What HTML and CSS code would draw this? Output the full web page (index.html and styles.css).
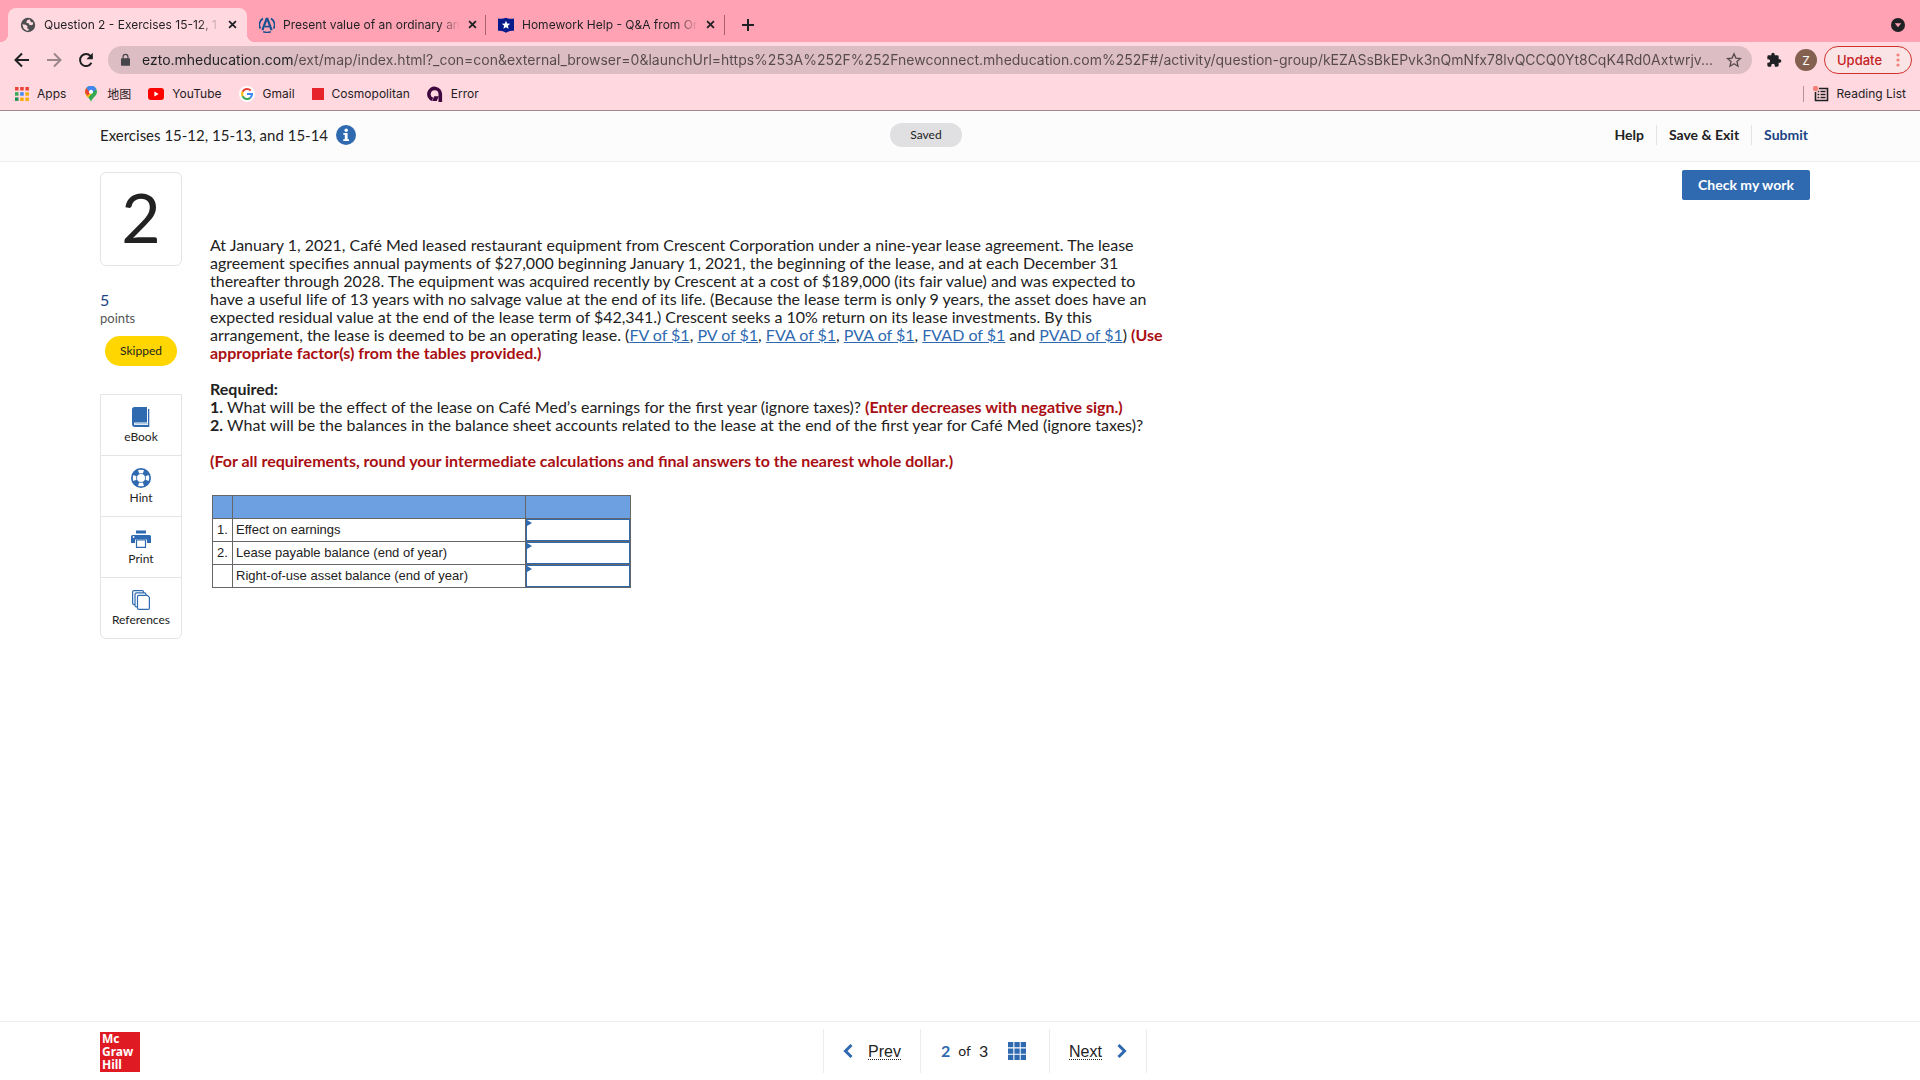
FILE: index.html
```html
<!DOCTYPE html>
<html lang="en">
<head>
    <meta charset="UTF-8">
    <meta name="viewport" content="width=device-width, initial-scale=1.0">
    <title>Question 2 - Exercises 15-12, 15-13, and 15-14</title>
    <link rel="stylesheet" href="styles.css">
</head>
<body>
    <div class="browser">
        <div class="tabs">
            <div class="tab active">
                <svg class="favicon" viewBox="0 0 16 16"><circle cx="8" cy="8" r="7.2" fill="#4d4d50"/><path d="M9.600 2.300L6.800 3.600 6.400 6 8.800 6.200 9.200 7.800 11.500 8.200 13.200 7.200 12.600 5 11 5.200zM2.300 7.200L5.600 7.800 7.600 9.200 7 11.200 8.800 12 8.400 13.800 6.400 13.600 3.600 11.600z" fill="#ffd9df"/></svg>
                <span class="tab-title">Question 2 - Exercises 15-12, 1</span>
                <button class="close" aria-label="Close tab"><svg viewBox="0 0 10 10"><path d="M1.2 1.2l7.6 7.6M8.8 1.2L1.2 8.8"/></svg></button>
            </div>
            <div class="tab">
                <svg class="favicon" viewBox="0 0 16 16"><g fill="none" stroke="#16508f"><path d="M4 1.600A7.200 7.200 0 0 0 1.400 11.500M12 1.600a7.200 7.200 0 0 1 2.600 9.900" stroke-width="1.700"/><path d="M3.400 13.200L7.600 1.800h.8l4.200 11.400" stroke-width="2.200"/><path d="M6 9.600h4.500" stroke-width="1.600"/><path d="M4.200 14.800q3.800 1.200 7.600 0" stroke-width="1.500"/></g></svg>
                <span class="tab-title">Present value of an ordinary an</span>
                <button class="close" aria-label="Close tab"><svg viewBox="0 0 10 10"><path d="M1.2 1.2l7.6 7.6M8.8 1.2L1.2 8.8"/></svg></button>
            </div>
            <div class="tab">
                <svg class="favicon" viewBox="0 0 16 16"><path d="M0 1.500q4.200 1 8-.8 3.800 1.800 8 .8v12.300q-4.500-.6-8 2-3.500-2.600-8-2z" fill="#061a8c"/><path d="M8 3.700l1.200 2.800 3 .3-2.300 2 .7 3L8 10.200l-2.600 1.600.7-3-2.300-2 3-.3z" fill="#fff"/></svg>
                <span class="tab-title">Homework Help - Q&amp;A from Or</span>
                <button class="close" aria-label="Close tab"><svg viewBox="0 0 10 10"><path d="M1.2 1.2l7.6 7.6M8.8 1.2L1.2 8.8"/></svg></button>
            </div>
            <button class="new-tab" aria-label="New tab"><svg viewBox="0 0 12 12"><path d="M6 0v12M0 6h12"/></svg></button>
            <button class="tab-search" aria-label="Search tabs"><svg viewBox="0 0 14 14"><circle cx="7" cy="7" r="7" fill="#1f2024"/><path d="M3.800 5.300h6.400L7 9.300z" fill="#ff9fb0"/></svg></button>
        </div>
        <div class="toolbar">
            <button class="nav-btn" aria-label="Back"><svg viewBox="0 0 16 16"><path d="M8 1.500L1.500 8 8 14.500M2 8h13"/></svg></button>
            <button class="nav-btn disabled" aria-label="Forward"><svg viewBox="0 0 16 16"><path d="M8 1.500L14.500 8 8 14.500M14 8H1"/></svg></button>
            <button class="nav-btn" aria-label="Reload"><svg viewBox="0 0 16 16"><path d="M13.400 10.800A6 6 0 1 1 12.600 4.100L14.200 5.700"/><path d="M14.800.8v6.400H8.400z" fill="#1f2024" stroke="none"/></svg></button>
            <div class="address">
                <svg class="lock" viewBox="0 0 10 14"><path d="M1 5h8q1 0 1 1v6.500q0 1-1 1H1q-1 0-1-1V6q0-1 1-1z" fill="#46464a"/><path d="M2.300 6V3.400a2.700 2.700 0 0 1 5.400 0V6" fill="none" stroke="#46464a" stroke-width="1.300"/></svg>
                <input class="url" type="text" aria-label="Address" value="ezto.mheducation.com/ext/map/index.html?_con=con&amp;external_browser=0&amp;launchUrl=https%253A%252F%252Fnewconnect.mheducation.com%252F#/activity/question-group/kEZASsBkEPvk3nQmNfx78lvQCCQ0Yt8CqK4Rd0Axtwrjv...">
                <button class="star" aria-label="Bookmark this page"><svg viewBox="0 0 16 16"><path d="M8 1.800l1.900 4.300 4.600.4-3.500 3.100 1 4.600L8 11.800l-4 2.400 1-4.600-3.500-3.100 4.600-.4z"/></svg></button>
            </div>
            <button class="ext" aria-label="Extensions"><svg viewBox="0 0 24 24"><path d="M20.500 11H19V7a2 2 0 0 0-2-2h-4V3.500a2.500 2.500 0 0 0-5 0V5H4a2 2 0 0 0-2 2v3.800h1.500a2.700 2.700 0 0 1 0 5.400H2V20a2 2 0 0 0 2 2h3.800v-1.500a2.700 2.700 0 0 1 5.400 0V22H17a2 2 0 0 0 2-2v-4h1.500a2.500 2.500 0 0 0 0-5z"/></svg></button>
            <button class="avatar">Z</button>
            <button class="update">Update <svg viewBox="0 0 4 14"><circle cx="2" cy="2" r="1.600"/><circle cx="2" cy="7" r="1.600"/><circle cx="2" cy="12" r="1.600"/></svg></button>
        </div>
        <div class="bookmarks">
            <a class="bookmark" href="#"><svg class="apps-icon" viewBox="0 0 14 14"><path d="M0 0h3.500v3.500H0zM5.200 0h3.500v3.500H5.200zM10.400 0h3.500v3.500h-3.500z" fill="#ea4335"/><path d="M0 5.200h3.500v3.500H0z" fill="#34a853"/><path d="M5.200 5.200h3.500v3.500H5.200z" fill="#4285f4"/><path d="M10.400 5.200h3.500v3.500h-3.500zM5.200 10.400h3.500v3.500H5.200zM10.400 10.400h3.500v3.500h-3.500z" fill="#fbab05"/><path d="M0 10.400h3.500v3.500H0z" fill="#1e8e4e"/></svg>Apps</a>
            <a class="bookmark" href="#"><svg class="round-icon" viewBox="-2 0 16 16"><path d="M6 16C5.500 12.500 0 10 0 5.800A6 6 0 0 1 12 5.800C12 10 6.500 12.500 6 16z" fill="#34a853"/><path d="M.8 8.800A6 6 0 0 1 1.400 2L8 6.500 3 11.800z" fill="#fbbc04"/><path d="M.1 6.500A6 6 0 0 1 1.400 2L6 5.800 2.500 9.800z" fill="#ea4335"/><path d="M1.400 2A6 6 0 0 1 11.300 3L6 8z" fill="#4285f4"/><circle cx="6" cy="5.800" r="2.100" fill="#fff"/></svg>地图</a>
            <a class="bookmark" href="#"><svg class="wide-icon" viewBox="0 0 16 12"><rect width="16" height="12" rx="3" fill="#f00"/><path d="M6.400 3.500v5L10.600 6z" fill="#fff"/></svg>YouTube</a>
            <a class="bookmark" href="#"><svg class="round-icon" viewBox="0 0 16 16"><circle cx="8" cy="8" r="8" fill="#fff"/><g fill="none" stroke-width="2.100"><path d="M11.700 4.500A5 5 0 0 0 3.600 5.800" stroke="#ea4335"/><path d="M3.600 5.800a5 5 0 0 0 0 4.500" stroke="#fbbc04"/><path d="M3.600 10.300a5 5 0 0 0 7.800 1.400" stroke="#34a853"/><path d="M11.400 11.700A5 5 0 0 0 13 8H8" stroke="#4285f4"/></g></svg>Gmail</a>
            <a class="bookmark" href="#"><svg class="square-icon" viewBox="0 0 12 12"><path d="M0 0h12v12H0z" fill="#e6242b"/></svg>Cosmopolitan</a>
            <a class="bookmark" href="#"><svg class="round-icon" viewBox="0 0 16 16"><path d="M5.500 13.400A5.700 5.700 0 1 1 13.300 7.800V16" fill="none" stroke="#400a40" stroke-width="3.600"/><path d="M7.200 10.200h4.600l-2 4.800H5.200z" fill="#400a40"/></svg>Error</a>
            <a class="bookmark reading" href="#"><svg class="list-icon" viewBox="0 0 16 16"><path d="M2.500 2.500h12v12h-12z" fill="none" stroke="#1f2024" stroke-width="1.600"/><path d="M4.500 5.500h1.800M7.500 5.500h5M4.500 8.500h1.800M7.500 8.500h5M4.500 11.500h1.800M7.500 11.500h5" stroke="#1f2024" stroke-width="1.600"/><circle cx="2.500" cy="2.500" r="3.500" fill="#ffd9df"/><circle cx="2.500" cy="2.500" r="2.700" fill="#f28279"/></svg>Reading List</a>
        </div>
    </div>

    <header class="app-header">
        <div class="title">
            Exercises 15-12, 15-13, and 15-14
            <button class="info" aria-label="Information"><svg viewBox="0 0 20 20"><circle cx="10" cy="10" r="10" fill="#2f6ab0"/><path d="M7.300 8h4.300v6.200H13V16H7.300v-1.800h1.500V9.800H7.300z" fill="#fff"/><circle cx="10.200" cy="5.200" r="1.700" fill="#fff"/></svg></button>
        </div>
        <span class="saved">Saved</span>
        <nav class="actions">
            <a href="#">Help</a>
            <a href="#">Save &amp; Exit</a>
            <a class="submit" href="#">Submit</a>
        </nav>
    </header>

    <main>
        <aside>
            <div class="number">2</div>
            <div class="points"><b>5</b>points</div>
            <div class="skipped">Skipped</div>
            <div class="tools">
                <button class="tool"><svg viewBox="0 0 20 20"><path d="M3.500 0H16v15.500H4.200a1.300 1.300 0 0 0 0 2.600H17V2h1.300v18H4a3 3 0 0 1-3-3V2.500A2.500 2.500 0 0 1 3.500 0z" fill="#2f6ab0"/><path d="M4 16.800h12.500" stroke="#8db0d8"/></svg>eBook</button>
                <button class="tool"><svg viewBox="0 0 20 20"><circle cx="10" cy="10" r="7" fill="none" stroke="#2f6ab0" stroke-width="6"/><g fill="none" stroke="#fff" stroke-width="3.400"><path d="M7.600 3.900a6.600 6.600 0 0 1 4.800 0M16.100 7.600a6.600 6.600 0 0 1 0 4.800M12.400 16.100a6.600 6.600 0 0 1-4.800 0M3.900 12.400a6.600 6.600 0 0 1 0-4.800"/></g></svg>Hint</button>
                <button class="tool"><svg viewBox="0 0 20 20"><path d="M5 1.500h10v3H5zM1.500 6h17q1.500 0 1.500 1.500V14h-4v-3.500H4V14H0V7.500Q0 6 1.500 6z" fill="#2f6ab0"/><path d="M5.500 11h9v7.300h-9z" fill="#fff" stroke="#2f6ab0" stroke-width="1.200"/><circle cx="2.600" cy="8" r=".9" fill="#fff"/></svg>Print</button>
                <button class="tool"><svg viewBox="0 0 20 20"><g fill="#fff" stroke="#2f6ab0" stroke-width="1.200"><rect x="1.600" y=".6" width="11" height="14" rx="1.500"/><rect x="4" y="2.900" width="11" height="14" rx="1.500"/><path d="M8 5.400h8.400l2 2v10.500q0 1.500-1.500 1.500H8q-1.500 0-1.500-1.500v-11Q6.500 5.400 8 5.400z"/></g></svg>References</button>
            </div>
        </aside>

        <section class="question">
            <p>At January 1, 2021, Café Med leased restaurant equipment from Crescent Corporation under a nine-year lease agreement. The lease<br>
            agreement specifies annual payments of $27,000 beginning January 1, 2021, the beginning of the lease, and at each December 31<br>
            thereafter through 2028. The equipment was acquired recently by Crescent at a cost of $189,000 (its fair value) and was expected to<br>
            have a useful life of 13 years with no salvage value at the end of its life. (Because the lease term is only 9 years, the asset does have an<br>
            expected residual value at the end of the lease term of $42,341.) Crescent seeks a 10% return on its lease investments. By this<br>
            arrangement, the lease is deemed to be an operating lease. (<a href="#">FV of $1</a>, <a href="#">PV of $1</a>, <a href="#">FVA of $1</a>, <a href="#">PVA of $1</a>, <a href="#">FVAD of $1</a> and <a href="#">PVAD of $1</a>) <strong class="red">(Use<br>
            appropriate factor(s) from the tables provided.)</strong></p>
            <p><strong>Required:</strong><br>
            <strong>1.</strong> What will be the effect of the lease on Café Med’s earnings for the first year (ignore taxes)? <strong class="red">(Enter decreases with negative sign.)</strong><br>
            <strong>2.</strong> What will be the balances in the balance sheet accounts related to the lease at the end of the first year for Café Med (ignore taxes)?</p>
            <p><strong class="red">(For all requirements, round your intermediate calculations and final answers to the nearest whole dollar.)</strong></p>

            <table>
                <thead>
                    <tr><th class="num"></th><th class="label"></th><th class="value"></th></tr>
                </thead>
                <tbody>
                    <tr><td class="num">1.</td><td><label for="earnings">Effect on earnings</label></td><td class="answer"><input type="text" id="earnings"></td></tr>
                    <tr><td class="num">2.</td><td><label for="payable">Lease payable balance (end of year)</label></td><td class="answer"><input type="text" id="payable"></td></tr>
                    <tr><td class="num"></td><td><label for="asset">Right-of-use asset balance (end of year)</label></td><td class="answer"><input type="text" id="asset"></td></tr>
                </tbody>
            </table>
        </section>

        <button class="check">Check my work</button>
    </main>

    <footer>
        <div class="logo">Mc<br>Graw<br>Hill</div>
        <nav class="pager">
            <a class="page-link" href="#"><svg viewBox="0 0 10 14"><path d="M8.500 1L2.500 7l6 6"/></svg><span>Prev</span></a>
            <div class="count"><b>2</b><span class="of">of</span><span>3</span>
                <button class="grid" aria-label="All questions"><svg viewBox="0 0 18 18"><path d="M0 0h5.300v5.300H0zM6.400 0h5.300v5.300H6.400zM12.700 0H18v5.300h-5.300zM0 6.400h5.300v5.300H0zM6.400 6.400h5.300v5.300H6.400zM12.700 6.400H18v5.300h-5.300zM0 12.700h5.300V18H0zM6.400 12.700h5.300V18H6.400zM12.700 12.700H18V18h-5.300z"/></svg></button>
            </div>
            <a class="page-link" href="#"><span>Next</span><svg viewBox="0 0 10 14"><path d="M1.500 1l6 6-6 6"/></svg></a>
        </nav>
    </footer>
</body>
</html>
```

FILE: styles.css
```css
* {
    box-sizing: border-box;
}
body {
    margin: 0;
    min-height: 100vh;
    display: flex;
    flex-direction: column;
    background: #fff;
    color: #222;
    font-family: Lato, sans-serif;
    font-size: 16px;
}
button {
    font: inherit;
    color: inherit;
    background: none;
    border: none;
    padding: 0;
    cursor: pointer;
}
a {
    color: inherit;
    text-decoration: none;
}
svg {
    display: block;
    flex: none;
}

/* browser window */
.browser {
    background: #ffd9df;
    border-bottom: 1px solid #a3868f;
    color: #1f2024;
    font-family: Inter, "Noto Sans CJK SC", sans-serif;
    font-size: 12px;
}
.tabs {
    display: flex;
    align-items: center;
    height: 42px;
    padding: 8px 15px 0 8px;
    background: #ffa2b3;
}
.tab {
    position: relative;
    display: flex;
    align-items: center;
    width: 239px;
    height: 34px;
    padding: 0 10px 1px 12px;
}
.tab + .tab::after {
    content: "";
    position: absolute;
    right: 0;
    top: 7px;
    width: 1px;
    height: 20px;
    background: #a9606e;
}
.tab.active {
    background: #ffd9df;
    border-radius: 8px 8px 0 0;
}
.tab.active::before,
.tab.active::after {
    content: "";
    position: absolute;
    bottom: 0;
    width: 8px;
    height: 8px;
}
.tab.active::before {
    left: -8px;
    background: radial-gradient(circle at 0 0, #ffa2b3 8px, #ffd9df 8px);
}
.tab.active::after {
    right: -8px;
    background: radial-gradient(circle at 100% 0, #ffa2b3 8px, #ffd9df 8px);
}
.favicon {
    width: 16px;
    height: 16px;
    margin-right: 8px;
}
.tab-title {
    flex: 1;
    white-space: nowrap;
    -webkit-mask-image: linear-gradient(to right, #000 88%, transparent);
    mask-image: linear-gradient(to right, #000 88%, transparent);
}
.close {
    margin-left: 8px;
}
.close svg {
    width: 9px;
    height: 9px;
}
.close path,
.new-tab path {
    stroke: #1f2024;
    stroke-width: 2;
}
.new-tab {
    margin: 0 auto 1px 17px;
}
.new-tab svg {
    width: 12px;
    height: 12px;
}
.tab-search {
    margin-bottom: 1px;
}
.tab-search svg {
    width: 14px;
    height: 14px;
}
.toolbar {
    display: flex;
    align-items: center;
    height: 36px;
    padding: 0 8px 0 14px;
}
.nav-btn {
    margin-right: 16px;
}
.nav-btn svg {
    width: 16px;
    height: 16px;
    fill: none;
    stroke: #1f2024;
    stroke-width: 2;
}
.nav-btn.disabled {
    opacity: .45;
}
.address {
    flex: 1;
    display: flex;
    align-items: center;
    height: 28px;
    margin-left: -2px;
    padding: 0 10px 0 13px;
    border-radius: 14px;
    background: #dcbdc3;
}
.lock {
    width: 9px;
    height: 14px;
    margin-right: 12px;
}
.url {
    flex: 1;
    min-width: 0;
    height: 28px;
    padding: 0 0 1px;
    border: none;
    font-family: Inter, sans-serif;
    font-size: 14px;
    color: #55494d;
    background: linear-gradient(to right, #1f2024 151px, #55494d 151px);
    -webkit-background-clip: text;
    background-clip: text;
    -webkit-text-fill-color: transparent;
}
.star svg {
    width: 16px;
    height: 16px;
    fill: none;
    stroke: #55494d;
    stroke-width: 1.3;
}
.ext {
    margin: 0 13px 0 14px;
}
.ext svg {
    width: 16px;
    height: 16px;
    fill: #1f2024;
}
.avatar {
    width: 22px;
    height: 22px;
    margin-right: 7px;
    border-radius: 50%;
    background: #83604f;
    color: #fff;
}
.update {
    display: flex;
    align-items: center;
    justify-content: space-between;
    width: 88px;
    height: 28px;
    padding: 0 11px 0 12px;
    border: 1px solid #d2302b;
    border-radius: 14px;
    background: #fbe4e6;
    color: #c5221f;
    font-size: 13px;
    font-weight: 500;
}
.update svg {
    width: 4px;
    height: 14px;
    fill: #f28279;
}
.bookmarks {
    display: flex;
    align-items: center;
    gap: 17px;
    height: 32px;
    padding: 0 14px 1px 15px;
}
.bookmark {
    display: flex;
    align-items: center;
    gap: 8px;
    height: 16px;
}
.apps-icon {
    width: 14px;
    height: 14px;
}
.wide-icon {
    width: 16px;
    height: 12px;
}
.round-icon,
.list-icon {
    width: 16px;
    height: 16px;
}
.square-icon {
    width: 12px;
    height: 12px;
}
.reading {
    margin-left: auto;
    padding-left: 9px;
    border-left: 1px solid #b3929a;
}

/* assignment header */
.app-header {
    display: grid;
    grid-template-columns: 1fr auto 1fr;
    align-items: center;
    height: 51px;
    padding: 0 112px 2px 100px;
    background: #fcfcfc;
    border-bottom: 1px solid #ececec;
}
.title {
    display: flex;
    align-items: center;
    gap: 8px;
    font-size: 15px;
}
.info svg {
    width: 20px;
    height: 20px;
}
.saved {
    margin-right: 56px;
    padding: 0 20px;
    border-radius: 12px;
    background: #e0dfe2;
    font-size: 12px;
    line-height: 24px;
}
.actions {
    display: flex;
    justify-content: flex-end;
    font-size: 14px;
    font-weight: bold;
    line-height: 20px;
}
.actions a + a {
    margin-left: 12px;
    padding-left: 12px;
    border-left: 1px solid #e4e4e4;
}
.actions .submit {
    color: #1a4484;
}

/* question */
main {
    flex: 1;
    display: flex;
    align-items: flex-start;
    padding: 8px 110px 20px 100px;
}
aside {
    flex: none;
    width: 82px;
    margin: 2px 28px 0 0;
}
.number {
    height: 94px;
    border: 1px solid #e4e4e4;
    border-radius: 6px;
    font-size: 68px;
    line-height: 88px;
    text-align: center;
}
.points {
    margin-top: 24px;
    color: #555;
    font-size: 13px;
    line-height: 16px;
}
.points b {
    display: block;
    color: #1a4484;
    font-size: 16px;
    font-weight: normal;
    line-height: 20px;
}
.skipped {
    width: 72px;
    margin: 10px auto 28px;
    border-radius: 15px;
    background: #ffd600;
    font-size: 12px;
    line-height: 30px;
    text-align: center;
}
.tools {
    border: 1px solid #e4e4e4;
    border-radius: 0 0 6px 6px;
}
.tool {
    display: flex;
    flex-direction: column;
    align-items: center;
    gap: 2px;
    width: 100%;
    height: 60px;
    padding-top: 12px;
    font-size: 12px;
    line-height: 16px;
}
.tool + .tool {
    height: 61px;
    border-top: 1px solid #e4e4e4;
}
.tool svg {
    width: 20px;
    height: 20px;
}
.question {
    flex: 1;
    padding-top: 66px;
    line-height: 18px;
    white-space: nowrap;
}
.question p {
    margin: 0 0 18px;
}
.question p a {
    color: #2f6ab0;
    text-decoration: underline;
}
.red {
    color: #a90e13;
}
table {
    margin: 25px 0 0 2px;
    border-collapse: collapse;
    font-family: "Liberation Sans", Arial, sans-serif;
    font-size: 13px;
}
th,
td {
    height: 23px;
    padding: 0 3px;
    border: 1px solid #666;
    text-align: left;
}
th {
    background: #6da0e0;
}
.num {
    width: 20px;
    padding: 0 4px;
}
.label {
    width: 293px;
}
.value {
    width: 105px;
}
.answer {
    position: relative;
    padding: 0;
}
.answer::before {
    content: "";
    position: absolute;
    left: 1px;
    top: 1px;
    border-left: 5px solid #2f6ab0;
    border-top: 3px solid transparent;
    border-bottom: 3px solid transparent;
}
.answer input {
    display: block;
    width: 104px;
    height: 22px;
    padding: 0 6px;
    border: 1px solid #2f6ab0;
    background: #fff;
}
.check {
    width: 128px;
    height: 30px;
    padding-bottom: 2px;
    border-radius: 2px;
    background: #2f6ab0;
    color: #fff;
    font-size: 14px;
    font-weight: bold;
}

/* bottom bar */
footer {
    display: grid;
    grid-template-columns: 1fr auto 1fr;
    align-items: center;
    height: 59px;
    padding: 0 100px;
    border-top: 1px solid #ececec;
}
.logo {
    width: 40px;
    height: 40px;
    margin-top: 2px;
    padding: 0 2px;
    background: #e01a22;
    color: #fff;
    font-family: "Noto Sans", sans-serif;
    font-size: 12px;
    font-weight: bold;
    line-height: 13px;
}
.pager {
    display: flex;
    height: 44px;
    margin-left: 50px;
    border-right: 1px solid #ececec;
}
.page-link,
.count {
    display: flex;
    align-items: center;
    border-left: 1px solid #ececec;
}
.page-link {
    gap: 15px;
    width: 97px;
    justify-content: center;
    font-family: "Liberation Sans", Arial, sans-serif;
}
.page-link span {
    margin-top: 2px;
    border-bottom: 1px dotted #222;
    line-height: 15px;
}
.page-link svg {
    width: 10px;
    height: 14px;
    fill: none;
    stroke: #2f6ab0;
    stroke-width: 3;
}
.count {
    width: 129px;
    padding: 0 0 1px 20px;
    gap: 8px;
}
.count b {
    color: #2f6ab0;
}
.of {
    font-size: 14px;
}
.grid {
    margin-left: 12px;
}
.grid svg {
    width: 18px;
    height: 18px;
    fill: #2f6ab0;
}
```
